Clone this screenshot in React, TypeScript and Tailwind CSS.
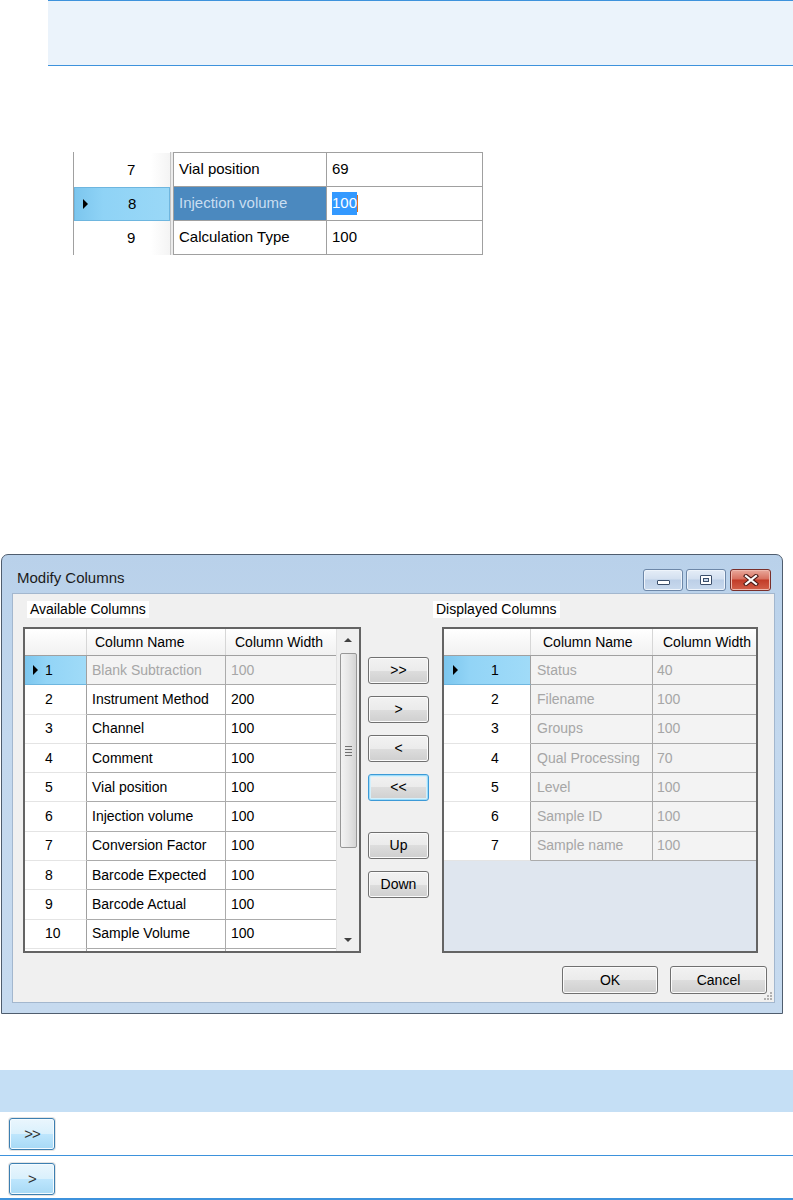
import React from 'react';

const win7Btn =
  'flex items-center justify-center rounded-[3px] border border-[#707070] bg-[linear-gradient(#f2f2f2_0%,#ebebeb_50%,#dddddd_50%,#cfcfcf_100%)] shadow-[inset_0_0_0_1px_#fbfbfb] text-[14px] text-black';

const aeroBlueBtn =
  'flex items-center justify-center w-[46px] h-[32px] rounded-[3px] border border-[#3c7fb1] bg-[linear-gradient(#eaf6fd_0%,#d9f0fc_50%,#bee6fd_50%,#a7d9f5_100%)] shadow-[0_0_0_1px_#e4e4e4,inset_0_0_0_1px_#f4fbff] text-[15px] text-[#303030] tracking-[-1px]';

const Tri = () => (
  <span className="w-0 h-0 border-y-[5px] border-y-transparent border-l-[5px] border-l-black" />
);

const availableRows = [
  ['1', 'Blank Subtraction', '100'],
  ['2', 'Instrument Method', '200'],
  ['3', 'Channel', '100'],
  ['4', 'Comment', '100'],
  ['5', 'Vial position', '100'],
  ['6', 'Injection volume', '100'],
  ['7', 'Conversion Factor', '100'],
  ['8', 'Barcode Expected', '100'],
  ['9', 'Barcode Actual', '100'],
  ['10', 'Sample Volume', '100'],
  ['', '', ''],
];

const displayedRows = [
  ['1', 'Status', '40'],
  ['2', 'Filename', '100'],
  ['3', 'Groups', '100'],
  ['4', 'Qual Processing', '70'],
  ['5', 'Level', '100'],
  ['6', 'Sample ID', '100'],
  ['7', 'Sample name', '100'],
];

function SnippetGrid() {
  const rows = [
    { n: '7', name: 'Vial position', val: '69' },
    { n: '8', name: 'Injection volume', val: '100', sel: true },
    { n: '9', name: 'Calculation Type', val: '100' },
  ];
  return (
    <div className="ml-[73px] mt-[86px] flex text-[15px]">
      <div className="w-[98px] flex flex-col border-l border-[#a0a0a0] border-r border-r-[#c4c4c4] pt-[1px]">
        {rows.map((r) => (
          <div
            key={r.n}
            className={
              'h-[34px] flex items-center pl-[8px] ' +
              (r.sel
                ? 'bg-[linear-gradient(90deg,#7cc6ee_0%,#8fd3f6_30%,#9ad8f7_100%)] border border-[#6eb6df]'
                : 'bg-[linear-gradient(90deg,#ffffff_0%,#ffffff_80%,#f4f4f4_100%)]')
            }
          >
            <span className="w-[45px] flex items-center">{r.sel && <Tri />}</span>
            <span className="text-black">{r.n}</span>
          </div>
        ))}
      </div>
      <div className="w-[2px] bg-[#ececec]" />
      <div className="flex flex-col border-t border-l border-[#a0a0a0]">
        {rows.map((r) => (
          <div key={r.n} className="flex h-[34px]">
            <div
              className={
                'w-[153px] border-r border-b border-[#a0a0a0] flex items-center pl-[5px] ' +
                (r.sel ? 'bg-[#4b89bf] text-[#c9def1]' : 'bg-white text-black')
              }
            >
              {r.name}
            </div>
            <div className="w-[156px] border-r border-b border-[#a0a0a0] bg-white flex items-center pl-[5px] text-black">
              {r.sel ? (
                <>
                  <span className="bg-[#3399ff] text-white">{r.val}</span>
                  <span className="w-[1px] h-[17px] bg-[#e07020]" />
                </>
              ) : (
                r.val
              )}
            </div>
          </div>
        ))}
      </div>
    </div>
  );
}

function AvailableGrid() {
  return (
    <div className="w-[338px] h-[326px] border-2 border-[#646464] bg-white flex overflow-hidden text-[14px]">
      <div className="w-[311px] flex flex-col">
        <div className="flex h-[27px] shrink-0 border-b border-[#a0a0a0] bg-[linear-gradient(#ffffff,#f1f1f1)]">
          <div className="w-[62px] border-r border-[#d6d6d6]" />
          <div className="w-[139px] border-r border-[#d6d6d6] pl-[8px] flex items-center">Column Name</div>
          <div className="w-[110px] pl-[9px] flex items-center">Column Width</div>
        </div>
        {availableRows.map(([n, name, w], i) => {
          const sel = i === 0;
          return (
            <div key={i} className="flex h-[29.3px] shrink-0">
              <div
                className={
                  'w-[62px] border-r border-[#a0a0a0] flex items-center pl-[8px] ' +
                  (sel
                    ? 'bg-[linear-gradient(90deg,#7cc6ee_0%,#92d4f6_35%,#a0dbf8_100%)] border-b border-b-[#6eb6df]'
                    : 'bg-white border-b border-b-[#e4e4e4]')
                }
              >
                <span className="w-[12px] flex items-center">{sel && <Tri />}</span>
                <span>{n}</span>
              </div>
              <div
                className={
                  'w-[139px] border-r border-b border-[#ababab] flex items-center pl-[5px] ' +
                  (sel ? 'bg-[#f3f3f3] text-[#a6a6a6]' : 'bg-white text-black')
                }
              >
                {name}
              </div>
              <div
                className={
                  'w-[110px] border-b border-[#ababab] flex items-center pl-[5px] ' +
                  (sel ? 'bg-[#f3f3f3] text-[#a6a6a6]' : 'bg-white text-black')
                }
              >
                {w}
              </div>
            </div>
          );
        })}
      </div>
      <div className="w-[23px] flex flex-col bg-[#efefef] border-l border-[#e2e2e2]">
        <div className="h-[22px] shrink-0 flex items-center justify-center">
          <span className="w-0 h-0 border-x-[4px] border-x-transparent border-b-[4px] border-b-[#404040]" />
        </div>
        <div className="ml-[3px] mt-[2px] w-[17px] h-[195px] rounded-[2px] border border-[#979797] bg-[linear-gradient(90deg,#f3f3f3,#e6e6e6_50%,#d4d4d4)] flex flex-col items-center justify-center gap-[2px]">
          <span className="w-[7px] h-[1px] bg-[#707070]" />
          <span className="w-[7px] h-[1px] bg-[#707070]" />
          <span className="w-[7px] h-[1px] bg-[#707070]" />
          <span className="w-[7px] h-[1px] bg-[#707070]" />
        </div>
        <div className="flex-1" />
        <div className="h-[22px] shrink-0 flex items-center justify-center">
          <span className="w-0 h-0 border-x-[4px] border-x-transparent border-t-[4px] border-t-[#404040]" />
        </div>
      </div>
    </div>
  );
}

function DisplayedGrid() {
  return (
    <div className="w-[316px] h-[326px] border-2 border-[#646464] bg-white flex flex-col overflow-hidden text-[14px]">
      <div className="flex h-[27px] shrink-0 border-b border-[#a0a0a0] bg-[linear-gradient(#ffffff,#f1f1f1)]">
        <div className="w-[87px] border-r border-[#d6d6d6]" />
        <div className="w-[122px] border-r border-[#d6d6d6] pl-[12px] flex items-center">Column Name</div>
        <div className="w-[103px] pl-[10px] flex items-center">Column Width</div>
      </div>
      {displayedRows.map(([n, name, w], i) => {
        const sel = i === 0;
        return (
          <div key={n} className="flex h-[29.3px] shrink-0">
            <div
              className={
                'w-[87px] border-r border-[#a0a0a0] flex items-center pl-[9px] ' +
                (sel
                  ? 'bg-[linear-gradient(90deg,#7cc6ee_0%,#92d4f6_30%,#a0dbf8_100%)] border-b border-b-[#6eb6df]'
                  : 'bg-white border-b border-b-[#e4e4e4]')
              }
            >
              <span className="w-[38px] flex items-center">{sel && <Tri />}</span>
              <span>{n}</span>
            </div>
            <div className="w-[122px] border-r border-b border-[#ababab] bg-[#f3f3f3] text-[#a6a6a6] flex items-center pl-[6px]">
              {name}
            </div>
            <div className="w-[103px] border-b border-[#ababab] bg-[#f3f3f3] text-[#a6a6a6] flex items-center pl-[4px]">
              {w}
            </div>
          </div>
        );
      })}
      <div className="flex-1 bg-[#dfe6ef]" />
    </div>
  );
}

function CaptionButtons() {
  return (
    <div className="flex items-center gap-[3px] pt-[11px] pr-[11px]">
      <div className="w-[40px] h-[22px] rounded-[3px] border border-[#6d87a8] bg-[linear-gradient(#e5edf7_0%,#d3e0f0_45%,#bccfe7_50%,#c9daee_100%)] shadow-[inset_0_0_0_1px_#eef4fb] flex items-center justify-center">
        <span className="w-[13px] h-[5px] mt-[6px] rounded-[1px] border border-[#3b4f6b] bg-white" />
      </div>
      <div className="w-[40px] h-[22px] rounded-[3px] border border-[#6d87a8] bg-[linear-gradient(#e5edf7_0%,#d3e0f0_45%,#bccfe7_50%,#c9daee_100%)] shadow-[inset_0_0_0_1px_#eef4fb] flex items-center justify-center">
        <span className="w-[12px] h-[10px] rounded-[1px] border border-[#3b4f6b] bg-white flex items-center justify-center">
          <span className="w-[6px] h-[4px] border border-[#3b4f6b] bg-[#c9d8ea]" />
        </span>
      </div>
      <div className="ml-[1px] w-[41px] h-[22px] rounded-[3px] border border-[#7a2f2a] bg-[linear-gradient(#e9a99c_0%,#d7705f_45%,#c23b28_50%,#d2604a_100%)] shadow-[inset_0_0_0_1px_#efb8ad] flex items-center justify-center">
        <svg width="16" height="12" viewBox="0 0 16 12">
          <path d="M3 2 L13 10 M13 2 L3 10" stroke="#4a1a16" strokeWidth="4.2" strokeLinecap="square" />
          <path d="M3 2 L13 10 M13 2 L3 10" stroke="#ffffff" strokeWidth="2.2" strokeLinecap="square" />
        </svg>
      </div>
    </div>
  );
}

function ModifyColumnsDialog() {
  return (
    <div className="ml-[1px] mt-[299px] w-[782px] h-[460px] rounded-t-[7px] border border-[#4f5d6e] bg-[linear-gradient(#b9d1ea_0%,#c3d8ee_40%,#c6daef_100%)] flex flex-col">
      <div className="h-[38px] shrink-0 flex justify-between">
        <div className="pl-[15px] pt-[14px] text-[15px] leading-[18px] text-[#1b1b1b]">Modify Columns</div>
        <CaptionButtons />
      </div>
      <div className="relative ml-[10px] w-[763px] h-[410px] shrink-0 border border-[#a3b7ce] bg-[#f0f0f0] flex flex-col">
        <div className="flex h-[359px]">
          <div className="ml-[10px] pt-[7px] flex flex-col">
            <span className="ml-[4px] self-start h-[17px] leading-[17px] px-[3px] bg-white text-[14px] text-black">
              Available Columns
            </span>
            <div className="mt-[9px]">
              <AvailableGrid />
            </div>
          </div>
          <div className="ml-[7px] pt-[63px] flex flex-col w-[61px]">
            <div className={win7Btn + ' h-[27px]'}>&gt;&gt;</div>
            <div className={win7Btn + ' h-[27px] mt-[12px]'}>&gt;</div>
            <div className={win7Btn + ' h-[27px] mt-[12px]'}>&lt;</div>
            <div className="mt-[12px] h-[27px] flex items-center justify-center rounded-[3px] border border-[#3c9ad7] bg-[linear-gradient(#f2f2f2_0%,#ebebeb_50%,#dddddd_50%,#cfcfcf_100%)] shadow-[inset_0_0_0_1px_#9fdcf8,inset_0_0_0_2px_#d4f0fc] text-[14px] text-black">
              &lt;&lt;
            </div>
            <div className={win7Btn + ' h-[27px] mt-[31px]'}>Up</div>
            <div className={win7Btn + ' h-[27px] mt-[12px]'}>Down</div>
          </div>
          <div className="ml-[4px] pt-[7px] flex flex-col">
            <span className="self-start h-[17px] leading-[17px] px-[3px] bg-white text-[14px] text-black">
              Displayed Columns
            </span>
            <div className="mt-[9px] ml-[9px]">
              <DisplayedGrid />
            </div>
          </div>
        </div>
        <div className="mt-[13px] flex justify-end gap-[12px] pr-[7px]">
          <div className={win7Btn + ' w-[96px] h-[28px]'}>OK</div>
          <div className={win7Btn + ' w-[97px] h-[28px]'}>Cancel</div>
        </div>
        <svg className="absolute right-[1px] bottom-[1px]" width="10" height="10" viewBox="0 0 10 10">
          <rect x="7" y="1" width="2" height="2" fill="#b0b0b0" />
          <rect x="7" y="4" width="2" height="2" fill="#b0b0b0" />
          <rect x="7" y="7" width="2" height="2" fill="#b0b0b0" />
          <rect x="4" y="4" width="2" height="2" fill="#b0b0b0" />
          <rect x="4" y="7" width="2" height="2" fill="#b0b0b0" />
          <rect x="1" y="7" width="2" height="2" fill="#b0b0b0" />
        </svg>
      </div>
    </div>
  );
}

export default function App() {
  return (
    <div className="w-[793px] h-[1200px] bg-white overflow-hidden font-['Liberation_Sans',Arial,sans-serif] text-black">
      <div className="ml-[48px] h-[66px] border-t border-b border-[#3d92dc] bg-[#ebf3fb]" />
      <SnippetGrid />
      <ModifyColumnsDialog />
      <div className="mt-[56px] h-[42px] bg-[#c5dff5]" />
      <div className="h-[44px] pt-[6px] pl-[9px] border-b border-[#3d92dc]">
        <div className={aeroBlueBtn}>&gt;&gt;</div>
      </div>
      <div className="h-[45px] pt-[7px] pl-[9px] border-b-[3px] border-[#3d92dc]">
        <div className={aeroBlueBtn}>&gt;</div>
      </div>
    </div>
  );
}
